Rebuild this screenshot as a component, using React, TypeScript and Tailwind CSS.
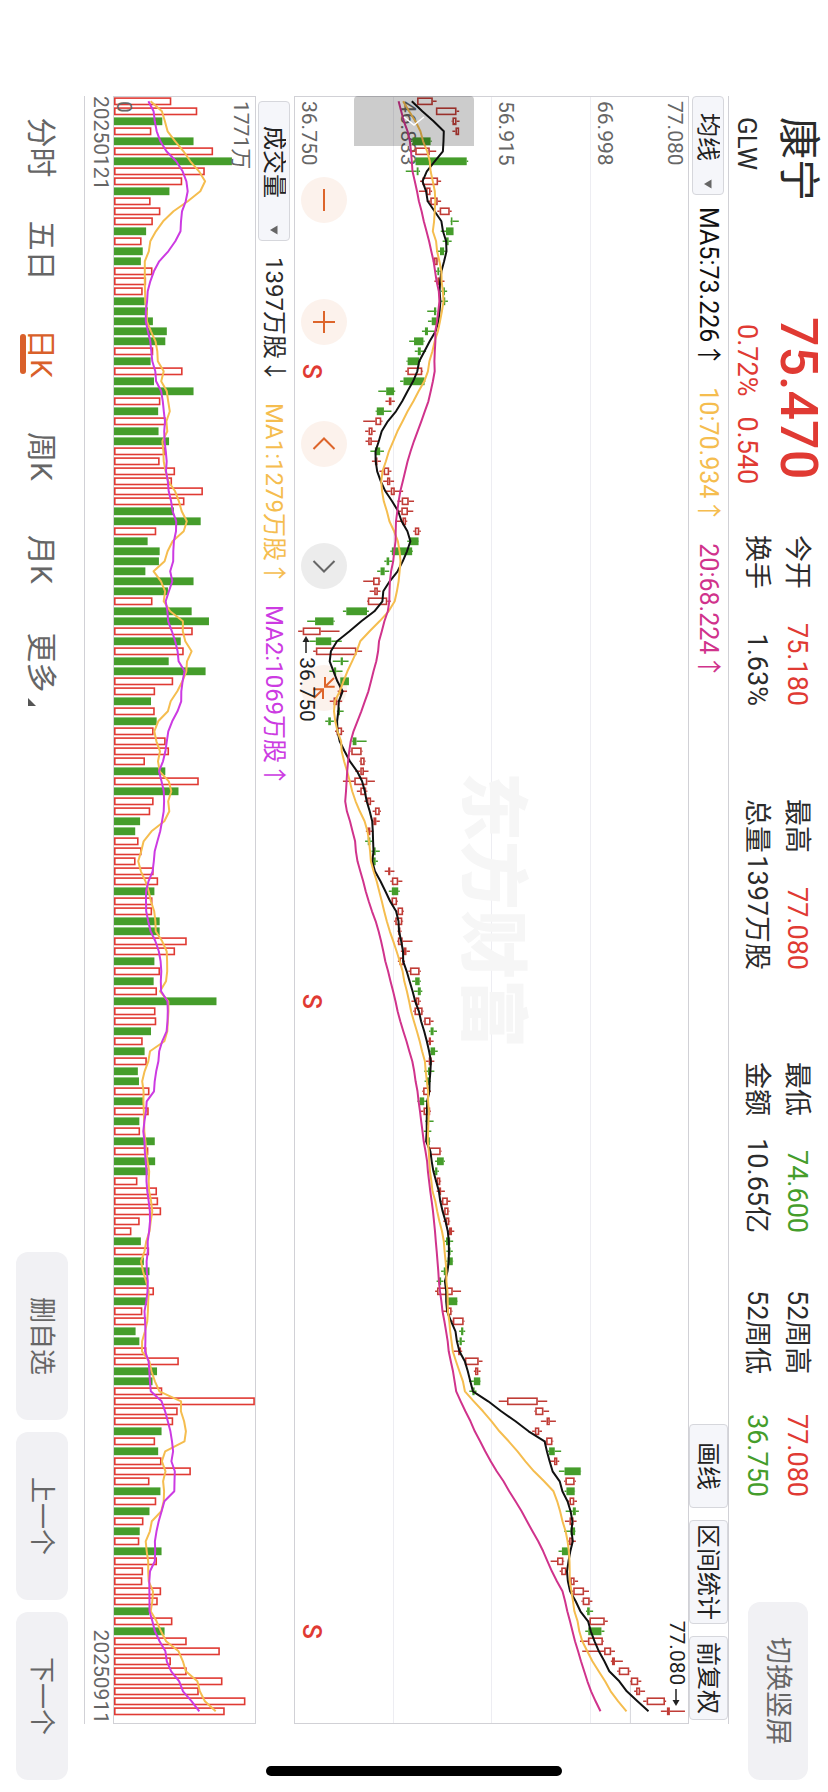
import React, { useState } from 'react';

type Tone = 'r' | 'g';

interface Bar {
  candle: Tone;
  volumeTone: Tone;
  volume: number;
  low: number;
  bodyLow: number;
  bodyHigh: number;
  high: number;
}

// candle tone + volume tone, volume, low, body low, body high, high (axis ticks)
const RAW_BARS = `
rr 163 816 816 858 868|rr 232 866 866 921 928|rg 139 908 910 921 929|rr 110 910 918 928 928
gg 222 800 804 852 855|rr 274 797 811 850 867|gg 324 806 812 948 952|gr 252 786 815 820 824
rr 192 824 830 872 880|rg 158 821 840 852 856|rr 108 842 851 871 880|rr 134 870 876 903 908
gr 114 905 906 910 927|gg 96 879 893 913 913|gr 84 884 893 900 908|gg 87 867 877 888 893
rg 82 858 861 871 872|gr 113 865 870 875 880|rr 96 862 870 876 889|gr 87 880 886 890 896
gg 92 880 887 891 898|gg 101 843 861 867 868|gg 114 845 855 868 870|gg 151 829 837 845 862
gg 147 795 808 833 836|gr 115 810 818 826 840|gg 108 788 791 822 826|rr 193 785 790 830 832
gg 117 771 780 836 838|gg 222 713 734 755 758|rr 134 732 741 748 757|gg 128 706 709 728 748
rr 148 673 705 721 724|rg 129 678 687 698 706|rg 157 679 686 696 714|gr 148 692 704 718 728
rr 132 696 704 711 720|rr 173 716 727 742 748|rr 165 726 736 745 755|rr 247 732 746 757 779
rr 198 764 775 794 808|rg 170 768 774 792 806|rg 241 760 777 787 790|rr 123 806 810 822 826
gg 100 790 797 820 821|gg 132 745 749 803 805|gg 130 729 735 742 750|gg 94 710 719 730 742
rg 222 673 699 717 719|rg 154 690 702 712 719|rr 113 683 685 737 746|gg 217 619 628 683 688
gg 263 524 545 594 597|rr 220 500 512 560 610|gg 188 530 547 588 616|rr 196 540 547 655 670
gg 156 592 613 619 634|gg 254 583 595 601 618|gr 168 612 612 635 635|rr 120 605 611 616 630
rg 109 584 594 604 617|gr 119 603 606 611 621|gg 124 572 580 587 595|rr 116 598 602 617 622
gr 148 642 645 655 682|rr 157 639 641 669 671|rr 93 663 665 677 679|rg 147 652 665 675 687
rr 236 619 649 684 704|rg 182 656 665 681 684|rr 116 676 683 694 703|rr 107 698 704 717 720
rg 80 697 700 708 717|rg 67 680 684 692 700|gr 76 678 685 692 698|gr 84 695 700 706 717
gr 68 695 699 706 712|rr 116 730 740 745 756|rr 128 745 749 766 777|gg 118 741 749 766 770
rr 113 744 748 763 765|rr 112 760 764 779 781|rg 132 755 758 777 779|rg 132 764 766 772 775
rr 204 763 765 778 804|rr 173 773 780 788 797|rg 118 765 769 781 784|rr 133 793 797 823 826
gg 116 803 811 823 826|gr 125 808 818 826 830|rg 283 801 812 822 826|rr 121 806 809 831 833
rr 123 833 835 852 860|gg 109 848 852 860 869|rr 87 843 848 853 860|gg 92 846 852 864 871
rr 98 840 847 855 862|gg 74 835 845 852 862|gg 77 836 842 848 853|rr 105 830 832 850 853
gg 90 817 823 835 843|rr 103 826 833 851 853|gg 78 838 842 847 860|gr 80 834 842 846 854
gg 119 840 843 850 851|rr 102 846 848 879 881|gg 120 864 869 887 890|gg 100 860 864 870 874
rr 73 864 868 878 880|rr 125 868 874 880 890|rr 128 879 882 898 905|rr 136 884 888 900 902
rr 79 886 892 902 904|rr 57 897 901 909 915|gg 82 889 893 904 912|gr 104 894 899 905 911
gg 90 891 897 911 912|gg 105 880 887 893 898|gg 98 868 874 880 886|rr 117 864 869 911 933
gg 98 897 899 923 924|rr 86 885 896 908 910|rr 96 907 911 940 942|gg 68 928 933 939 944
gg 78 923 929 935 943|rr 97 913 925 933 936|rr 183 941 943 980 990|rg 125 967 970 979 985
gg 113 954 967 984 985|gr 139 955 963 969 974|rr 385 1033 1055 1137 1162|rr 180 1128 1130 1152 1167
rr 168 1145 1160 1169 1185|rg 137 1122 1129 1141 1148|rr 120 1157 1159 1176 1178|gg 128 1164 1167 1182 1199
rr 137 1168 1180 1189 1194|gr 215 1193 1208 1251 1252|rr 105 1207 1210 1235 1238|gg 134 1208 1213 1235 1236
rr 123 1217 1221 1234 1241|gg 105 1211 1230 1238 1246|rr 89 1209 1221 1232 1240|gg 79 1207 1224 1236 1237
rr 78 1216 1220 1230 1238|gg 137 1192 1201 1217 1219|rr 125 1171 1188 1205 1207|rr 88 1195 1199 1213 1215
rr 86 1218 1223 1235 1244|rr 136 1228 1231 1260 1273|rr 127 1253 1256 1275 1282|gg 104 1265 1268 1275 1284
rr 166 1270 1274 1315 1323|gg 145 1263 1271 1306 1314|rr 204 1249 1270 1310 1312|rr 292 1255 1313 1332 1342
rr 162 1331 1334 1342 1363|rr 204 1348 1352 1380 1384|rr 299 1382 1384 1404 1412|rr 236 1393 1398 1409 1422
rr 360 1417 1426 1475 1478|rr 305 1464 1480 1488 1528
`;

const BARS: Bar[] = RAW_BARS.trim().split(/[|\n]/).map(row => {
  const [tones, ...nums] = row.split(' ');
  const [volume, low, bodyLow, bodyHigh, high] = nums.map(Number);
  return { candle: tones[0] as Tone, volumeTone: tones[1] as Tone, volume, low, bodyLow, bodyHigh, high };
});

// Plot size of the two panels
const PLOT_WIDTH = 1626;
const PRICE_HEIGHT = 393;
const VOLUME_HEIGHT = 141;
const TICK = 2.6576;

const barX = (i: number) => 4.3 + i * 10;
const priceY = (p: number) => 578 - p / TICK;
const volumeY = (v: number) => 145 - v / TICK;

// Moving average; `lead` covers the days before the window is full
const movingAverage = (values: number[], span: number, lead: number[]) =>
  values.map((_, i) =>
    i < lead.length ? lead[i] : values.slice(i - span + 1, i + 1).reduce((a, b) => a + b, 0) / span
  );

const closes = BARS.map(b => (b.candle === 'r' ? b.bodyHigh : b.bodyLow));
const volumes = BARS.map(b => b.volume);

const PRICE_LINES = [
  { color: '#111111', values: movingAverage(closes, 5, [802, 830, 860, 887]) },
  { color: '#f5bd4f', values: movingAverage(closes, 10, [779, 795, 812, 825, 832, 843, 850, 852, 858]) },
  {
    color: '#d0338c',
    values: movingAverage(closes, 20, [
      767, 774, 781, 791, 797, 800, 802, 804, 810, 816, 821, 828, 834, 841, 848, 854, 860, 864, 868,
    ]),
  },
];

const VOLUME_LINES = [
  { color: '#f5bd4f', values: movingAverage(volumes, 5, [108, 138, 146, 153]) },
  { color: '#cc3be2', values: movingAverage(volumes, 10, [102, 116, 119, 124, 134, 150, 176, 193, 203]) },
];

const toPoints = (values: number[], y: (v: number) => number) =>
  values.map((v, i) => `${barX(i)},${y(v).toFixed(1)}`).join(' ');

const SELL_MARKS = [27, 90, 153];

const STATS = [
  { width: 'w-[171px]', rows: [['今开', '75.180', 'text-[#e03a33]'], ['换手', '1.63%', 'text-[#2b2b2b]']] },
  { width: 'w-[171px] ml-[93px]', rows: [['最高', '77.080', 'text-[#e03a33]'], ['总量', '1397万股', 'text-[#2b2b2b]']] },
  { width: 'w-[171px] ml-[92px]', rows: [['最低', '74.600', 'text-[#459d2b]'], ['金额', '10.65亿', 'text-[#2b2b2b]']] },
  { width: 'w-[207px] ml-[57px]', rows: [['52周高', '77.080', 'text-[#e03a33]'], ['52周低', '36.750', 'text-[#459d2b]']] },
];

const PERIODS = ['分时', '五日', '日K', '周K', '月K', '更多'];

const Picker: React.FC<{ label: string; className: string; textClass: string }> = ({ label, className, textClass }) => (
  <div className={`relative h-8 ${className}`}>
    <select
      aria-label={label}
      className={`h-full w-full appearance-none rounded border border-[#d6d7dc] bg-[#f5f6fa] pt-px text-2xl leading-none text-[#222] ${textClass}`}
    >
      <option>{label}</option>
    </select>
    <svg viewBox="0 0 10 8" className="pointer-events-none absolute right-[6px] top-3 h-2 w-[10px]">
      <path d="M0.5 0.5h9L5 8z" fill="#666" />
    </svg>
  </div>
);

const PriceChart: React.FC = () => (
  <svg viewBox={`0 0 ${PLOT_WIDTH} ${PRICE_HEIGHT}`} preserveAspectRatio="none" className="absolute inset-0 h-full w-full">
    <path d="M1584 57.6H1626" stroke="#d6d6dc" />
    {BARS.map((b, i) => {
      const x = barX(i);
      const top = priceY(b.bodyHigh);
      const bottom = priceY(b.bodyLow);
      const color = b.candle === 'r' ? '#c03c36' : '#459d2b';
      return (
        <g key={i} stroke={color} strokeWidth="1.6">
          <path d={`M${x} ${priceY(b.high)}V${top}M${x} ${bottom}V${priceY(b.low)}`} />
          {b.candle === 'r' ? (
            <rect x={x - 3.1} y={top + 0.8} width="6.2" height={Math.max(bottom - top - 1.6, 0.6)} fill="none" />
          ) : (
            <rect x={x - 3.9} y={top} width="7.8" height={Math.max(bottom - top, 1.6)} fill={color} stroke="none" />
          )}
        </g>
      );
    })}
    {PRICE_LINES.map(line => (
      <polyline
        key={line.color}
        points={toPoints(line.values, priceY)}
        fill="none"
        stroke={line.color}
        strokeWidth="2"
        strokeLinejoin="round"
      />
    ))}
  </svg>
);

const VolumeChart: React.FC = () => (
  <svg viewBox={`0 0 ${PLOT_WIDTH} ${VOLUME_HEIGHT}`} preserveAspectRatio="none" className="absolute inset-0 h-full w-full">
    {BARS.map((b, i) => {
      const x = barX(i);
      const top = volumeY(b.volume);
      return b.volumeTone === 'r' ? (
        <rect
          key={i}
          x={x - 3.2}
          y={top + 0.8}
          width="6.4"
          height={VOLUME_HEIGHT - top - 1.6}
          fill="none"
          stroke="#e03a33"
          strokeWidth="1.6"
        />
      ) : (
        <rect key={i} x={x - 3.9} y={top} width="7.8" height={VOLUME_HEIGHT - top} fill="#459d2b" />
      );
    })}
    {VOLUME_LINES.map(line => (
      <polyline
        key={line.color}
        points={toPoints(line.values, volumeY)}
        fill="none"
        stroke={line.color}
        strokeWidth="2"
        strokeLinejoin="round"
      />
    ))}
  </svg>
);

// Zoom and pan buttons that float over the price chart
const CONTROLS = [
  { name: '缩小', d: 'M12 23h22', tone: 'bg-[#fcf2ec] text-[#dd652b]' },
  { name: '放大', d: 'M12 23h22M23 12v22', tone: 'bg-[#fcf2ec] text-[#dd652b]' },
  { name: '左移', d: 'M28 12.5L17.5 23L28 33.5', tone: 'bg-[#fcf2ec] text-[#dd652b]' },
  { name: '右移', d: 'M18 12.5L28.5 23L18 33.5', tone: 'bg-[#ececec] text-[#666]' },
  {
    name: '收起',
    d: 'M12 22h9.7V12.300M21.700 22L13 13M34 24h-9.700v9.700M24.300 24L33 33',
    tone: 'bg-[#fcf2ec] text-[#dd652b]',
  },
];

const App: React.FC = () => {
  const [period, setPeriod] = useState('日K');

  return (
    <div className="relative h-screen w-screen overflow-hidden bg-white">
      {/* Landscape screen shown on an upright device */}
      <div className="flex h-[100vw] w-[100vh] origin-top-left translate-x-[100vw] rotate-90 flex-col bg-white font-['Roboto','Noto_Sans_CJK_SC',sans-serif] text-[#2b2b2b]">
        {/* Quote header */}
        <header className="flex h-[99px] shrink-0 whitespace-nowrap pl-[117px] pr-3">
          <div className="w-[200px] pt-[6px]">
            <h1 className="text-[42px] leading-[48px]">康宁</h1>
            <p className="mt-3 text-[26px] leading-[30px]">GLW</p>
          </div>
          <div className="w-[218px] pt-[6px] text-[#e03a33]">
            <p className="text-[52px] font-medium leading-[48px]">75.470</p>
            <p className="mt-3 flex gap-5 pl-[7px] text-[27px] leading-[30px]">
              <span>0.72%</span>
              <span>0.540</span>
            </p>
          </div>
          {STATS.map(({ width, rows }) => (
            <dl key={rows[0][0]} className={`pt-[11px] text-[27px] leading-[40px] ${width}`}>
              {rows.map(([label, value, tone]) => (
                <div key={label} className="flex justify-between">
                  <dt>{label}</dt>
                  <dd className={tone}>{value}</dd>
                </div>
              ))}
            </dl>
          ))}
          <button className="ml-auto mt-5 h-[60px] w-[178px] rounded-xl bg-[#f1f1f4] text-[27px] text-[#666]">切换竖屏</button>
        </header>

        <main className="ml-24 mr-[68px] flex min-h-0 flex-1 flex-col">
          {/* Average line toolbar */}
          <div className="flex h-10 shrink-0 items-center whitespace-nowrap border-t border-[#d1d1d6] text-2xl">
            <Picker label="均线" className="w-[99px]" textClass="pl-4" />
            <p className="ml-3 flex gap-5 text-[25px]">
              <span className="text-[#111]">MA5:73.226↑</span>
              <span className="text-[#f5bd4f]">10:70.934↑</span>
              <span className="text-[#d0338c]">20:68.224↑</span>
            </p>
            <div className="ml-auto flex h-full gap-3 pr-1">
              <button className="w-[84px] rounded border border-[#d6d7dc] bg-[#f5f6fa] text-[#222]">画线</button>
              <button className="w-[104px] rounded border border-[#d6d7dc] bg-[#f5f6fa] text-[#222]">区间统计</button>
              <button className="w-[84px] rounded border border-[#d6d7dc] bg-[#f5f6fa] text-[#222]">前复权</button>
            </div>
          </div>

          {/* Price panel */}
          <section className="relative flex-1 border border-[#d1d1d6] text-[21px] leading-[25px]">
            <div className="absolute inset-0 grid grid-rows-4 text-[#666]">
              <div className="flex flex-col justify-between border-b border-[#ededf2] pb-px pl-1 pt-px">
                <span>77.080</span>
                <span>66.998</span>
              </div>
              <div className="flex items-end border-b border-[#ededf2] pb-px pl-1">56.915</div>
              <div className="flex items-end border-b border-[#ededf2] pb-px pl-1">46.833</div>
              <div className="flex items-end pb-px pl-1">36.750</div>
            </div>
            <div className="absolute inset-0 flex items-center justify-center text-[69px] font-black text-[#f6f6f6]">
              东方财富
            </div>
            <div className="absolute bottom-[6px] left-20 flex gap-[76px]">
              {CONTROLS.map(({ name, d, tone }) => (
                <button key={name} aria-label={name} className={`size-[46px] rounded-full ${tone}`}>
                  <svg viewBox="0 0 46 46" fill="none" stroke="currentColor" strokeWidth="2">
                    <path d={d} />
                  </svg>
                </button>
              ))}
            </div>
            <PriceChart />
            {SELL_MARKS.map(i => (
              <span
                key={i}
                className="absolute bottom-1 -translate-x-1/2 text-[25px] font-medium text-[#e03a33]"
                style={{ left: `${(barX(i) / PLOT_WIDTH) * 100}%` }}
              >
                S
              </span>
            ))}
            <div
              className="absolute -bottom-px flex items-center gap-1 text-[#222]"
              style={{ left: `${((barX(53) + 5) / PLOT_WIDTH) * 100}%` }}
            >
              <svg viewBox="0 0 17 8" className="h-2 w-[17px]">
                <path d="M0 4l6-3.500v7z" fill="currentColor" />
                <path d="M5 4h12" stroke="currentColor" strokeWidth="1.500" />
              </svg>
              36.750
            </div>
            <div
              className="absolute -top-px flex items-center gap-1 text-[#222]"
              style={{ right: `${((PLOT_WIDTH - barX(161) + 5) / PLOT_WIDTH) * 100}%` }}
            >
              77.080
              <svg viewBox="0 0 17 8" className="h-2 w-[17px]">
                <path d="M17 4l-6-3.500v7z" fill="currentColor" />
                <path d="M0 4h12" stroke="currentColor" strokeWidth="1.500" />
              </svg>
            </div>
            <button
              aria-label="展开"
              className="absolute -left-px top-[214px] flex h-[120px] w-[50px] items-center justify-center rounded-l bg-black/20 text-white"
            >
              <svg viewBox="0 0 10 22" className="h-[22px] w-[10px]" fill="none" stroke="currentColor" strokeWidth="1.500">
                <path d="M1 1L9 11L1 21" />
              </svg>
            </button>
          </section>

          {/* Volume toolbar */}
          <div className="flex h-[38px] shrink-0 items-center whitespace-nowrap pl-[5px] pt-px text-2xl">
            <Picker label="成交量" className="w-[140px]" textClass="pl-6" />
            <p className="ml-4 flex gap-5">
              <span>1397万股↓</span>
              <span className="text-[#f5bd4f]">MA1:1279万股↑</span>
              <span className="text-[#cc3be2]">MA2:1069万股↑</span>
            </p>
          </div>

          {/* Volume panel */}
          <section className="relative h-[143px] shrink-0 border border-[#d1d1d6] text-[21px] leading-[25px]">
            <VolumeChart />
            <div className="absolute inset-0 flex flex-col justify-between pl-1 pt-[2px] text-[#666]">
              <span>1771万</span>
              <span className="-mb-[3px]">0</span>
            </div>
          </section>
          <div className="flex h-[29px] shrink-0 justify-between border-b border-[#d1d1d6] text-[21px] leading-[25px] text-[#666]">
            <time dateTime="2025-01-21">20250121</time>
            <time dateTime="2025-09-11">20250911</time>
          </div>
        </main>

        {/* Period tabs */}
        <footer className="flex h-[84px] shrink-0 justify-between whitespace-nowrap pl-24 pr-3">
          <nav className="flex text-[30px]">
            {PERIODS.map(p => (
              <button
                key={p}
                onClick={() => setPeriod(p)}
                className={`relative w-[103px] ${p === period ? 'text-[#d9602a]' : 'text-[#666]'}`}
              >
                {p}
                {p === period && (
                  <span className="absolute bottom-5 left-1/2 h-[6px] w-10 -translate-x-1/2 rounded-full bg-[#d9602a]" />
                )}
                {p === '更多' && (
                  <svg viewBox="0 0 8 8" className="absolute bottom-7 right-2 size-2">
                    <path d="M8 0v8H0z" fill="#555" />
                  </svg>
                )}
              </button>
            ))}
          </nav>
          <div className="flex gap-3 pt-4 text-[26px] text-[#666]">
            <button className="h-[52px] w-[168px] rounded-xl bg-[#f1f1f4]">删自选</button>
            <button className="h-[52px] w-[168px] rounded-xl bg-[#f1f1f4]">上一个</button>
            <button className="h-[52px] w-[168px] rounded-xl bg-[#f1f1f4]">下一个</button>
          </div>
        </footer>
      </div>

      {/* Home indicator */}
      <div className="absolute bottom-4 left-1/2 h-[10px] w-[296px] -translate-x-1/2 rounded-full bg-black" />
    </div>
  );
};

export default App;
